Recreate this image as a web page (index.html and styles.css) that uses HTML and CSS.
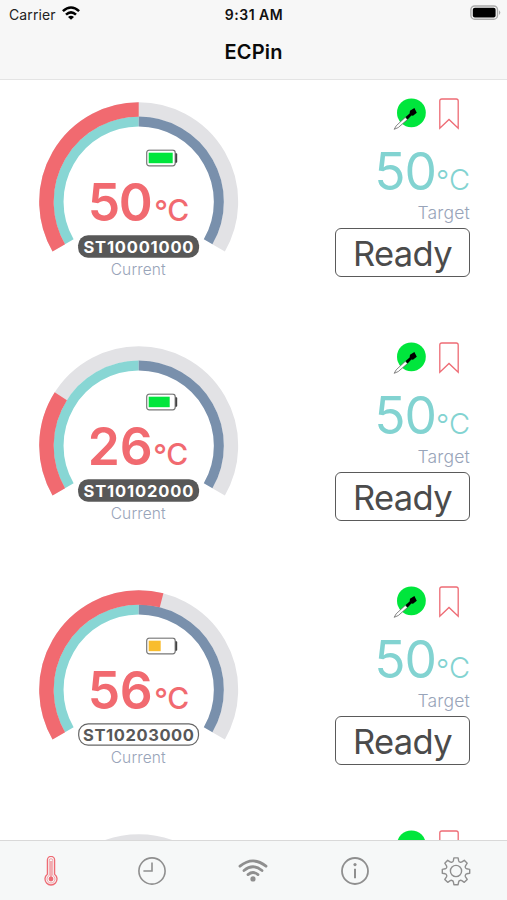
FILE: index.html
```html
<!DOCTYPE html>
<html lang="en">
<head>
  <meta charset="UTF-8">
  <meta name="viewport" content="width=device-width, initial-scale=1.0">
  <title>ECPin</title>
  <link rel="stylesheet" href="styles.css">
</head>
<body>
<svg class="symbols">
  <!-- 240 degree arcs, length normalised to 100 -->
  <symbol id="tracks" viewBox="0 0 200 180">
    <path class="track" d="M20.1 146.1 A92.25 92.25 0 1 1 179.9 146.1"/>
    <path class="cold" d="M30.6 140.1 A80.15 80.15 0 0 1 100 19.85"/>
    <path class="hot" d="M100 19.85 A80.15 80.15 0 0 1 169.4 140.1"/>
  </symbol>
  <symbol id="battery" viewBox="0 0 32 18">
    <rect x="1" y="1" width="28.5" height="15.6" rx="2.5" fill="#fff" stroke="#777" stroke-width="1.2"/>
    <path d="M30 4.2h.5q.8 0 .8 1v7.2q0 1-.8 1H30z" fill="#444" stroke="#444" stroke-width=".6"/>
  </symbol>
  <symbol id="probe" viewBox="0 0 34 34">
    <circle cx="18.4" cy="14.8" r="14.4" fill="#00e63c"/>
    <path d="M1.2 31.3 L3.2 27.8 L12.2 19.4 L14.4 21.6 L5.3 29.5 Z" fill="#fff" stroke="#666" stroke-width=".8"/>
    <path d="M12.6 19 L16.6 15.4 L17 12.8 L21.4 10 L23.8 14.8 L20 17.8 L18.4 17.6 L14.6 21.4 Z" fill="#000"/>
  </symbol>
  <symbol id="bookmark" viewBox="0 0 20 32">
    <path d="M.8 30.2 V3 Q.8 1 2.8 1 H17.2 Q19.2 1 19.2 3 V30.2 L10 21.5 Z" fill="none" stroke="#ee6b74" stroke-width="1.3"/>
  </symbol>
</svg>

<header>
  <div class="status">
    <div class="carrier">Carrier
      <svg width="18" height="14" viewBox="0 0 18 14" fill="none" stroke="#000" stroke-width="2.6">
        <path d="M.9 5.1 Q9 -2.1 17.1 5.1"/>
        <path d="M4 8.6 Q9 4.1 14 8.6"/>
        <path d="M9 13.8 L6 10.9 Q9 8.6 12 10.9 Z" fill="#000" stroke="none"/>
      </svg>
    </div>
    <div class="time">9:31 AM</div>
    <svg class="phone-battery" width="31" height="16" viewBox="0 0 31 16">
      <rect x=".9" y="1" width="26.6" height="13.2" rx="3.8" fill="#f7f7f7" stroke="#aaa" stroke-width="1.4"/>
      <rect x="2.8" y="2.8" width="22.8" height="9.6" rx="2" fill="#000"/>
      <path d="M29 5.2 Q31.6 7.6 29 10 Z" fill="#aaa"/>
    </svg>
  </div>
  <h1>ECPin</h1>
</header>

<main>
  <section class="device">
    <svg class="gauge" viewBox="0.3 0.3 200 180">
      <use href="#tracks" width="200" height="180"/>
      <path class="value" pathLength="100" stroke-dasharray="50 200" d="M20.1 146.1 A92.25 92.25 0 1 1 179.9 146.1"/>
      <use href="#battery" x="107" y="47.5" width="32" height="18"/>
      <rect x="110" y="51" width="24" height="10.5" fill="#00e63c"/>
      <text class="temp" x="49" y="119.3" textLength="65">50</text>
      <text class="unit" x="115.5 128.5" y="120.8 119.3">°C</text>
      <rect class="serial-bg" x="39.4" y="133.6" width="121" height="22.4" rx="10"/>
      <text class="serial" x="44.8" y="150.9" textLength="110">ST10001000</text>
      <text class="caption" x="72" y="173.3" textLength="55">Current</text>
    </svg>
    <div class="target">
      <div class="icons"><svg class="probe"><use href="#probe"/></svg><svg class="bookmark"><use href="#bookmark"/></svg></div>
      <div class="target-temp">50<span class="deg">°</span><span>C</span></div>
      <div class="label">Target</div>
      <div class="state">Ready</div>
    </div>
  </section>

  <section class="device">
    <svg class="gauge" viewBox="0.3 0.3 200 180">
      <use href="#tracks" width="200" height="180"/>
      <path class="value" pathLength="100" stroke-dasharray="26 200" d="M20.1 146.1 A92.25 92.25 0 1 1 179.9 146.1"/>
      <use href="#battery" x="107" y="47.5" width="32" height="18"/>
      <rect x="110" y="51" width="21" height="10.5" fill="#00e63c"/>
      <text class="temp" x="49" y="119.3" textLength="65">26</text>
      <text class="unit" x="114.5 127.5" y="120.8 119.3">°C</text>
      <rect class="serial-bg" x="39.4" y="133.6" width="121" height="22.4" rx="10"/>
      <text class="serial" x="44.8" y="150.9" textLength="110">ST10102000</text>
      <text class="caption" x="72" y="173.3" textLength="55">Current</text>
    </svg>
    <div class="target">
      <div class="icons"><svg class="probe"><use href="#probe"/></svg><svg class="bookmark"><use href="#bookmark"/></svg></div>
      <div class="target-temp">50<span class="deg">°</span><span>C</span></div>
      <div class="label">Target</div>
      <div class="state">Ready</div>
    </div>
  </section>

  <section class="device">
    <svg class="gauge" viewBox="0.3 0.3 200 180">
      <use href="#tracks" width="200" height="180"/>
      <path class="value" pathLength="100" stroke-dasharray="56 200" d="M20.1 146.1 A92.25 92.25 0 1 1 179.9 146.1"/>
      <use href="#battery" x="107" y="47.5" width="32" height="18"/>
      <rect x="110" y="51" width="12" height="10.5" fill="#f9bd2e"/>
      <text class="temp" x="49" y="119.3" textLength="65">56</text>
      <text class="unit" x="115.5 128.5" y="120.8 119.3">°C</text>
      <rect class="serial-bg outline" x="40" y="134.2" width="119.8" height="21.2" rx="9.5"/>
      <text class="serial dark" x="44.3" y="150.9" textLength="111">ST10203000</text>
      <text class="caption" x="72" y="173.3" textLength="55">Current</text>
    </svg>
    <div class="target">
      <div class="icons"><svg class="probe"><use href="#probe"/></svg><svg class="bookmark"><use href="#bookmark"/></svg></div>
      <div class="target-temp">50<span class="deg">°</span><span>C</span></div>
      <div class="label">Target</div>
      <div class="state">Ready</div>
    </div>
  </section>

  <section class="device">
    <svg class="gauge" viewBox="0.3 0.3 200 180"><use href="#tracks" width="200" height="180"/></svg>
    <div class="target">
      <div class="icons"><svg class="probe"><use href="#probe"/></svg><svg class="bookmark"><use href="#bookmark"/></svg></div>
    </div>
  </section>
</main>

<nav>
  <a class="active">
    <svg width="30" height="30" viewBox="0 0 30 30" fill="none" stroke="currentColor" stroke-width="1.3">
      <path d="M11.4 18.2 V4 a3.6 3.6 0 0 1 7.2 0 V18.2 a6 6 0 1 1 -7.2 0 Z"/>
      <path d="M13.3 19.4 V4.4 a1.7 1.7 0 0 1 3.4 0 V19.4 a4 4 0 1 1 -3.4 0 Z" stroke-width=".6"/>
      <path d="M15 5 V21" stroke-width="1.1"/>
      <circle cx="15" cy="23" r="2.4" fill="currentColor" stroke="none"/>
    </svg>
  </a>
  <a>
    <svg width="30" height="30" viewBox="0 0 30 30" fill="none" stroke="currentColor" stroke-width="1.6">
      <circle cx="15" cy="15" r="13.1"/>
      <path d="M15 6.4 V15 H6.4"/>
    </svg>
  </a>
  <a>
    <svg width="30" height="30" viewBox="0 0 30 30" fill="none" stroke="currentColor" stroke-width="2.8" stroke-linecap="round">
      <path d="M2 10.2 Q15 -.4 28 10.2"/>
      <path d="M6 14.5 Q15 6.9 24 14.5"/>
      <path d="M10 18.6 Q15 14.5 20 18.6"/>
      <circle cx="15" cy="22.9" r="2.6" fill="currentColor" stroke="none"/>
    </svg>
  </a>
  <a>
    <svg width="30" height="30" viewBox="0 0 30 30" fill="none" stroke="currentColor" stroke-width="1.8">
      <circle cx="15" cy="15" r="13"/>
      <path d="M15 12.8 V22.2" stroke-width="2"/>
      <circle cx="15" cy="8.6" r="1.6" fill="currentColor" stroke="none"/>
    </svg>
  </a>
  <a>
    <svg width="30" height="30" viewBox="0 0 30 30" fill="none" stroke="currentColor" stroke-width="1.4" stroke-linejoin="round">
      <circle cx="15" cy="15" r="5.6"/>
      <path d="M12.9 1.9 h4.2 l.6 3 q.3 1 1.3 1.2 q1 .4 1.9 -.2 l2.4 -1.6 l2.9 2.9 l-1.7 2.6 q-.5 .9 -.1 1.8 q.3 .9 1.3 1.2 l3 .6 v3.8 l-3 .6 q-1 .3 -1.3 1.2 q-.4 .9 .1 1.8 l1.7 2.6 l-2.9 2.9 l-2.5 -1.7 q-.9 -.5 -1.8 -.1 q-1 .3 -1.3 1.2 l-.6 3 h-4.2 l-.6 -3 q-.3 -.9 -1.3 -1.2 q-.9 -.4 -1.8 .1 l-2.5 1.7 l-2.9 -2.9 l1.7 -2.6 q.5 -.9 .1 -1.8 q-.3 -.9 -1.3 -1.2 l-3 -.6 v-3.8 l3 -.6 q1 -.3 1.3 -1.2 q.4 -.9 -.1 -1.8 l-1.7 -2.6 l2.9 -2.9 l2.4 1.6 q.9 .6 1.9 .2 q1 -.2 1.3 -1.2 Z"/>
    </svg>
  </a>
</nav>
</body>
</html>
```
FILE: styles.css
```css
* { box-sizing: border-box; }
body { margin: 0; height: 900px; overflow: hidden; display: flex; flex-direction: column; background: #fff; font-family: Inter, "Liberation Sans", sans-serif; }
.symbols { display: none; }

header { height: 80px; flex: none; background: #f7f7f7; border-bottom: 1.5px solid #e4e4e4; }
.status { display: grid; grid-template-columns: 1fr auto 1fr; align-items: center; height: 28px; padding: 0 6px 0 9px; font-size: 14px; }
.carrier { display: flex; align-items: center; gap: 6px; color: #222; letter-spacing: .1px; }
.carrier svg { margin-top: -2px; }
.time { font-weight: 600; color: #111; font-size: 14px; letter-spacing: .5px; margin-right: 2px; }
.phone-battery { justify-self: end; margin-top: -2px; }
h1 { margin: 11px 0 0; text-align: center; font-size: 20px; line-height: 26px; font-weight: 600; color: #0a0a0a; letter-spacing: .2px; }

main { flex: 1; min-height: 0; overflow: hidden; padding-top: 21.5px; }
.device { display: flex; justify-content: space-between; align-items: flex-start; height: 244.3px; padding: 0 37px 0 39px; }

.gauge { width: 200px; height: 180px; flex: none; }
.track, .cold, .hot, .value { fill: none; stroke-width: 14.5; }
.track { stroke: #e2e2e5; }
.value { stroke: #f16a70; }
.cold { stroke: #88d6d4; stroke-width: 10; }
.hot { stroke: #7990ac; stroke-width: 10; }
.temp { font-size: 51.5px; font-weight: 600; fill: #f16a70; }
.unit { font-size: 30px; font-weight: 500; fill: #f16a70; }
.serial-bg { fill: #585858; }
.serial-bg.outline { fill: #fff; stroke: #666; stroke-width: 1.2; }
.serial { font-size: 16.5px; font-weight: 650; fill: #fff; }
.serial.dark { fill: #585858; }
.caption { font-size: 15.5px; font-weight: 350; fill: #98a4b9; }

.target { display: flex; flex-direction: column; align-items: flex-end; }
.icons { display: flex; gap: 12px; padding-right: 11px; margin-top: -4px; }
.probe { width: 34px; height: 34px; }
.bookmark { width: 20px; height: 32px; }
.target-temp { height: 68px; line-height: 78px; font-size: 51.5px; font-weight: 400; color: #82d3d1; letter-spacing: -1px; white-space: nowrap; }
.target-temp span { font-size: 29px; font-weight: 350; letter-spacing: 0; }
.target-temp .deg { position: relative; top: 1.5px; }
.label { height: 28px; line-height: 26px; font-size: 17.5px; font-weight: 350; letter-spacing: .2px; color: #98a4b9; }
.state { width: 135px; height: 49px; line-height: 49px; border: 1.5px solid #5a5a5a; border-radius: 6px; text-align: center; font-size: 34.5px; letter-spacing: -.6px; color: #4b4b4b; }

nav { flex: none; height: 60px; display: grid; grid-template-columns: repeat(5, 1fr); background: #f6f8f8; border-top: 1.5px solid #d9d9d9; }
nav a { display: flex; justify-content: center; align-items: center; color: #8f8f8f; }
nav .active { color: #ee6b74; }
```
